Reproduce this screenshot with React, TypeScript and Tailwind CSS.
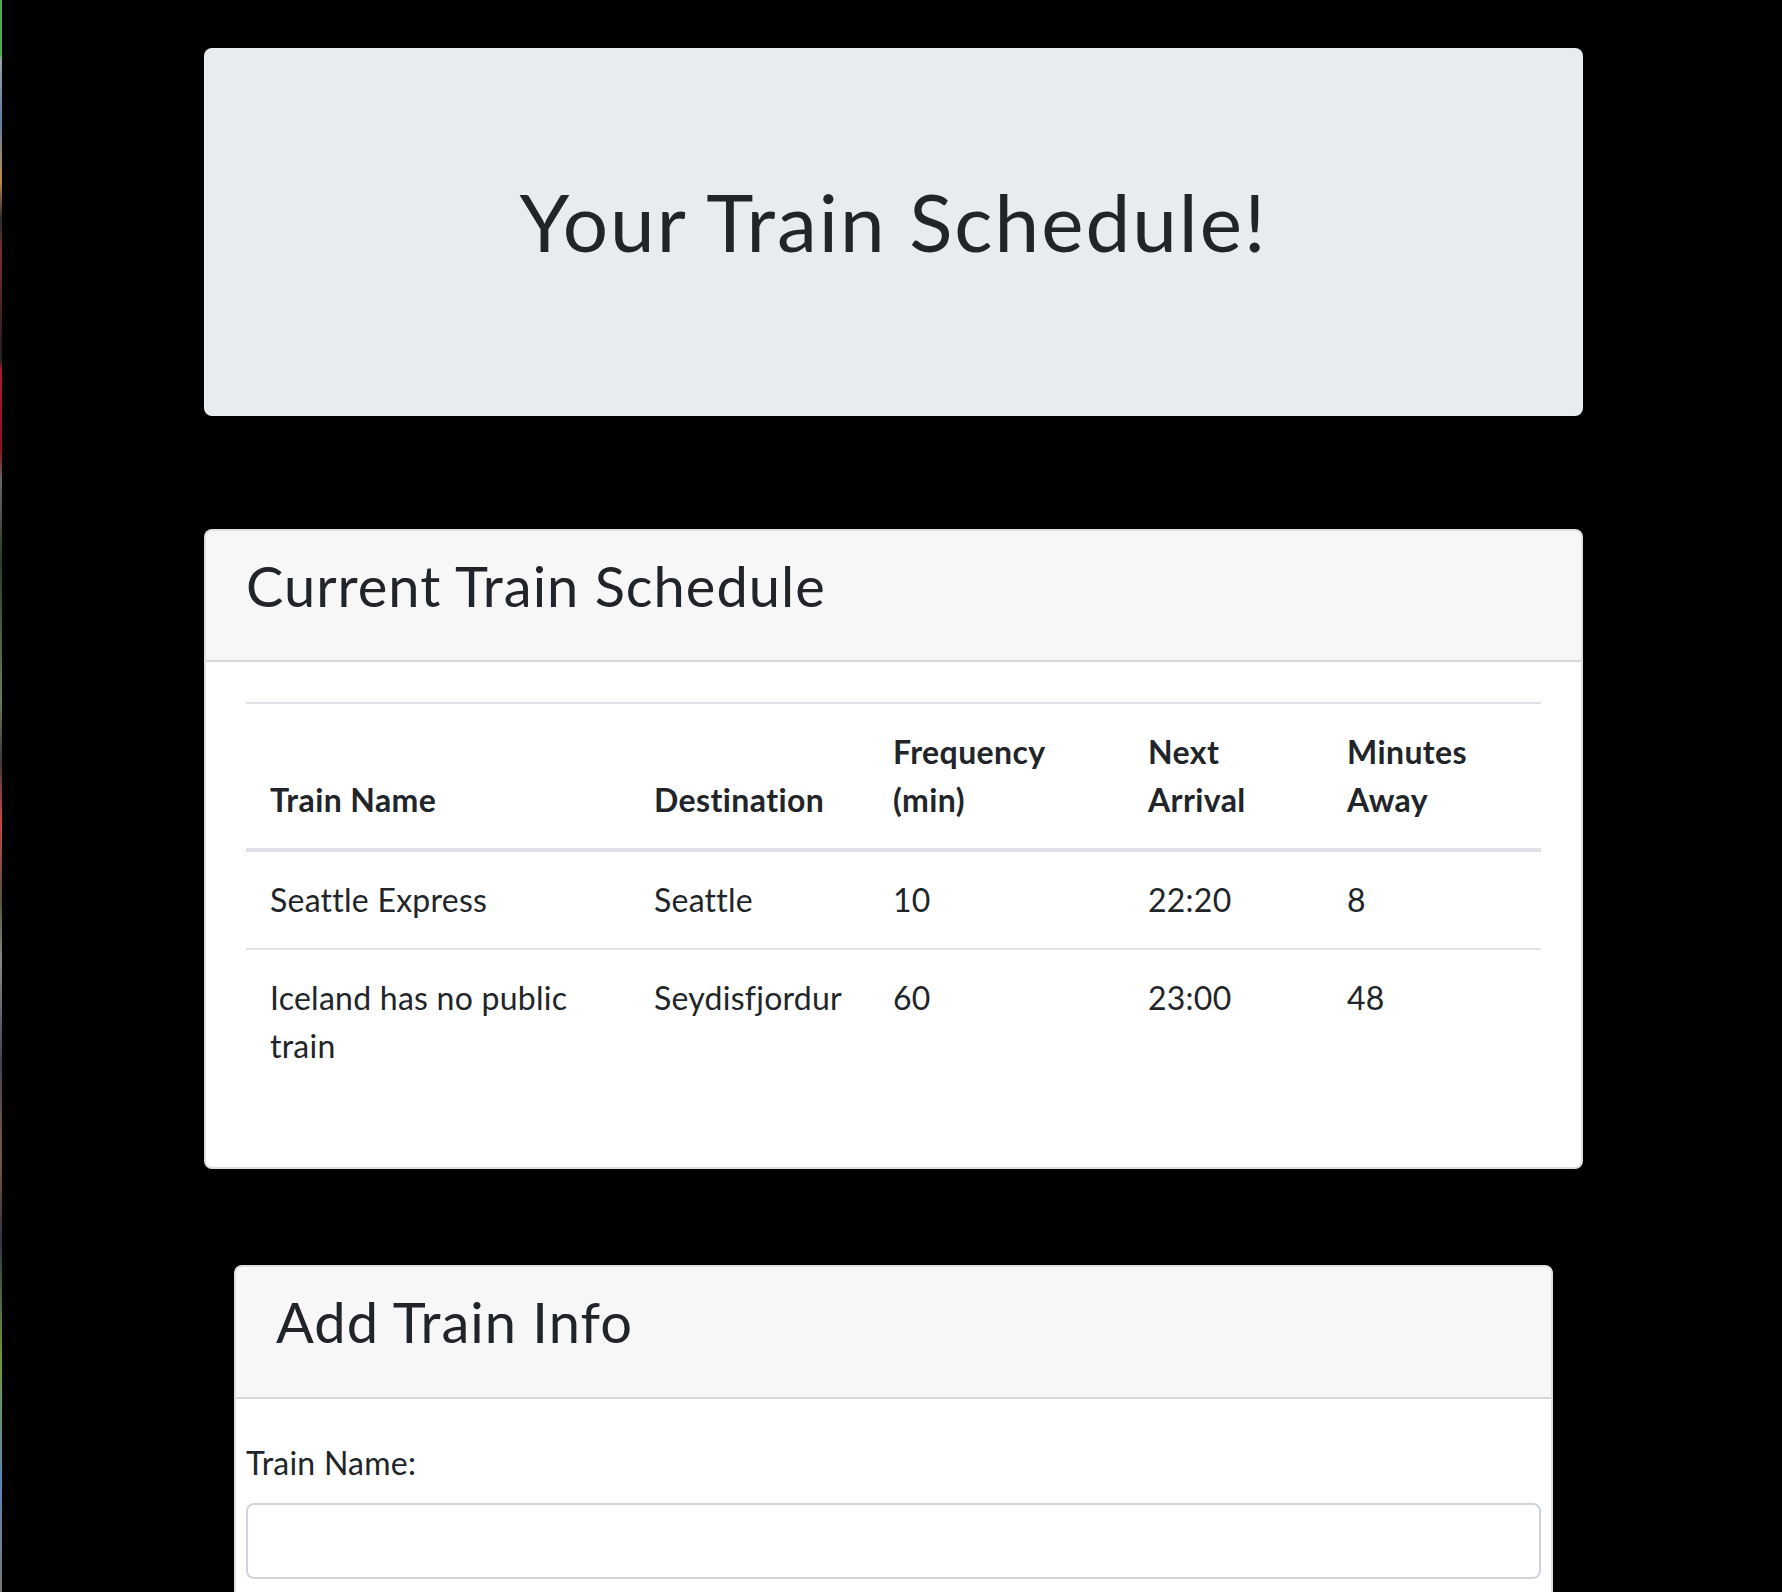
import React from "react";

type Train = {
  name: string;
  destination: string;
  frequency: number;
  nextArrival: string;
  minutesAway: number;
};

const TRAINS: Train[] = [
  { name: "Seattle Express", destination: "Seattle", frequency: 10, nextArrival: "22:20", minutesAway: 8 },
  { name: "Iceland has no public train", destination: "Seydisfjordur", frequency: 60, nextArrival: "23:00", minutesAway: 48 },
];

const font = "font-['Lato','Liberation_Sans',sans-serif]";

export default function App() {
  return (
    <div className={`flex min-h-screen bg-black text-[#212529] ${font}`}>
      {/* sliver of the background photo peeking in at the left edge */}
      <div className="w-[2px] shrink-0 bg-[linear-gradient(to_bottom,#4caf50_0px,#4caf50_55px,#9aa0a6_60px,#5b7fa8_120px,#c08a4a_180px,#2a2a2a_220px,#7a2e35_250px,#3a1e22_330px,#222_360px,#b0182c_370px,#8c1020_450px,#666_480px,#2f3b2a_560px,#6b7a55_700px,#3b3b3b_760px,#c44_820px,#553_900px,#888_960px,#445_1060px,#7a5544_1160px,#334_1240px,#6a9a3a_1360px,#5a88b8_1480px,#777_1592px)]" />
      <div className="flex-1 pl-[3px]">
        <div className="mx-auto w-[1379px] pt-[48px] pb-16">
          <div className="rounded-[8px] bg-[#e9ecef] px-16 pt-[125px] pb-[131px] text-center">
            <h1 className="mb-4 text-[80px] leading-[96px] font-normal tracking-[2px]">Your Train Schedule!</h1>
          </div>

          <div className="mt-[113px] rounded-[8px] border-2 border-black/[0.125] bg-white">
            <div className="rounded-t-[6px] border-b-2 border-black/[0.125] bg-[#f7f7f7] px-10 pt-[21px] pb-[25px]">
              <h3 className="mb-4 text-[56px] leading-[67px] font-normal tracking-[1px]">Current Train Schedule</h3>
            </div>
            <div className="px-10 pt-10 pb-[41px]">
              <table className="mb-8 w-full border-collapse text-left text-[32px] leading-[48px] tracking-[0.25px]">
                <thead>
                  <tr className="font-bold tracking-[0.4px]">
                    <th className="w-[384px] border-t-2 border-b-4 border-[#dee2e6] p-6 align-bottom">Train Name</th>
                    <th className="w-[239px] border-t-2 border-b-4 border-[#dee2e6] p-6 align-bottom">Destination</th>
                    <th className="w-[255px] border-t-2 border-b-4 border-[#dee2e6] p-6 align-bottom">Frequency (min)</th>
                    <th className="w-[199px] border-t-2 border-b-4 border-[#dee2e6] p-6 align-bottom">Next Arrival</th>
                    <th className="border-t-2 border-b-4 border-[#dee2e6] p-6 align-bottom">Minutes Away</th>
                  </tr>
                </thead>
                <tbody>
                  {TRAINS.map((t, i) => (
                    <tr key={t.name}>
                      <td className={`p-6 align-top ${i > 0 ? "border-t-2 border-[#dee2e6]" : ""}`}>{t.name}</td>
                      <td className={`p-6 align-top ${i > 0 ? "border-t-2 border-[#dee2e6]" : ""}`}>{t.destination}</td>
                      <td className={`p-6 align-top ${i > 0 ? "border-t-2 border-[#dee2e6]" : ""}`}>{t.frequency}</td>
                      <td className={`p-6 align-top ${i > 0 ? "border-t-2 border-[#dee2e6]" : ""}`}>{t.nextArrival}</td>
                      <td className={`p-6 align-top ${i > 0 ? "border-t-2 border-[#dee2e6]" : ""}`}>{t.minutesAway}</td>
                    </tr>
                  ))}
                </tbody>
              </table>
            </div>
          </div>

          <div className="mx-[30px] mt-[96px] rounded-[8px] border-2 border-black/[0.125] bg-white">
            <div className="rounded-t-[6px] border-b-2 border-black/[0.125] bg-[#f7f7f7] px-10 pt-[21px] pb-[26px]">
              <h3 className="mb-4 text-[56px] leading-[67px] font-normal tracking-[1px]">Add Train Info</h3>
            </div>
            <div className="px-[10px] pt-10 pb-10">
              <div className="mb-8">
                <label className="mb-4 block text-[32px] leading-[48px] tracking-[0.25px]">Train Name:</label>
                <input
                  type="text"
                  className="block h-[76px] w-full rounded-[8px] border-2 border-[#ced4da] bg-white px-6 text-[32px] outline-none"
                />
              </div>
            </div>
          </div>
        </div>
      </div>
    </div>
  );
}
